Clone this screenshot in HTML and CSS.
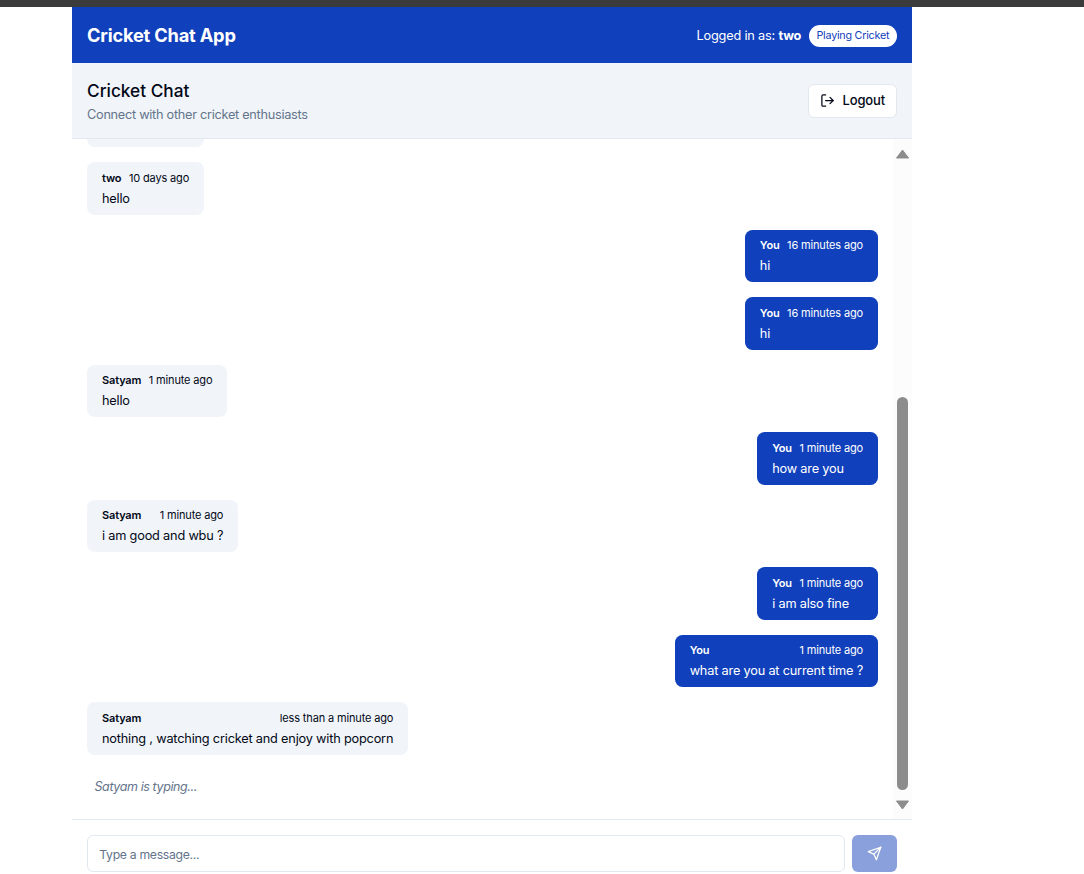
FILE: index.html
```html
<!DOCTYPE html>
<html lang="en">
<head>
<meta charset="utf-8">
<title>Cricket Chat App</title>
<link rel="stylesheet" href="styles.css">
</head>
<body>
<div class="browser-edge"></div>
<div class="app">
  <header class="app-header">
    <h1 class="app-title">Cricket Chat App</h1>
    <div class="user-info">
      <span>Logged in as: <strong>two</strong></span>
      <span class="badge">Playing Cricket</span>
    </div>
  </header>
  <section class="chat-header">
    <div>
      <h2 class="chat-title">Cricket Chat</h2>
      <p class="chat-sub">Connect with other cricket enthusiasts</p>
    </div>
    <button class="logout" type="button">
      <svg class="logout-icon" viewBox="0 0 24 24" fill="none" stroke="currentColor" stroke-width="2" stroke-linecap="round" stroke-linejoin="round"><path d="M9 21H5a2 2 0 0 1-2-2V5a2 2 0 0 1 2-2h4"/><polyline points="16 17 21 12 16 7"/><line x1="21" y1="12" x2="9" y2="12"/></svg>
      Logout
    </button>
  </section>
  <main class="chat-body">
    <div class="messages">
      <div class="msg other clipped"></div>
      <div class="msg other"><div class="meta"><span class="name">two</span><span>10 days ago</span></div><div class="text">hello</div></div>
      <div class="msg mine"><div class="meta"><span class="name">You</span><span>16 minutes ago</span></div><div class="text">hi</div></div>
      <div class="msg mine"><div class="meta"><span class="name">You</span><span>16 minutes ago</span></div><div class="text">hi</div></div>
      <div class="msg other"><div class="meta"><span class="name">Satyam</span><span>1 minute ago</span></div><div class="text">hello</div></div>
      <div class="msg mine"><div class="meta"><span class="name">You</span><span>1 minute ago</span></div><div class="text">how are you</div></div>
      <div class="msg other"><div class="meta"><span class="name">Satyam</span><span>1 minute ago</span></div><div class="text">i am good and wbu ?</div></div>
      <div class="msg mine"><div class="meta"><span class="name">You</span><span>1 minute ago</span></div><div class="text">i am also fine</div></div>
      <div class="msg mine"><div class="meta"><span class="name">You</span><span>1 minute ago</span></div><div class="text">what are you at current time ?</div></div>
      <div class="msg other"><div class="meta"><span class="name">Satyam</span><span>less than a minute ago</span></div><div class="text">nothing , watching cricket and enjoy with popcorn</div></div>
      <div class="typing">Satyam is typing...</div>
    </div>
    <div class="scrollbar">
      <svg class="arrow" viewBox="0 0 13 10"><path d="M6.5 1 12.5 9H.5z"/></svg>
      <div class="track"><div class="thumb"></div></div>
      <svg class="arrow" viewBox="0 0 13 10"><path d="M6.5 9 12.5 1H.5z"/></svg>
    </div>
  </main>
  <footer class="composer">
    <div class="input">Type a message...</div>
    <button class="send" type="button">
      <svg class="send-icon" viewBox="0 0 24 24" fill="none" stroke="currentColor" stroke-width="2" stroke-linecap="round" stroke-linejoin="round"><path d="m22 2-7 20-4-9-9-4Z"/><path d="M22 2 11 13"/></svg>
    </button>
  </footer>
</div>
</body>
</html>
```
FILE: styles.css
```css
* { box-sizing: border-box; }
html, body { margin: 0; height: 874px; overflow: hidden; background: #fff; }
body { font-family: Inter, "Noto Sans", sans-serif; color: #020817; font-size: 15px; }
h1, h2, p { margin: 0; }

.browser-edge { height: 7px; background: #3b3b3b; }
.app { width: 840px; margin-left: 72px; display: flex; flex-direction: column; height: 881px; background: #fff; }

.app-header { flex: none; height: 56px; padding: 1px 15px 0; display: flex; align-items: center; justify-content: space-between; background: #1040bb; color: #fff; }
.app-title { font-size: 18.25px; line-height: 26px; font-weight: 700; letter-spacing: -0.2px; margin-top: -1px; }
.user-info { display: flex; align-items: center; gap: 7.5px; font-size: 12.75px; letter-spacing: -0.2px; }
.user-info strong { font-weight: 700; }
.badge { background: #fff; color: #1040bb; font-size: 10.75px; line-height: 15px; letter-spacing: -0.23px; padding: 3.5px 7.75px; border-radius: 999px; }

.chat-header { flex: none; height: 76px; padding: 0 15px; display: flex; align-items: center; justify-content: space-between; background: #f1f5f9; border-bottom: 1px solid #e2e8f0; }
.chat-title { font-size: 17.25px; line-height: 26.25px; font-weight: 500; }
.chat-sub { font-size: 12.75px; line-height: 18.75px; letter-spacing: -0.29px; color: #64748b; padding-top: 2px; margin-bottom: -1px; }
.logout { display: flex; align-items: center; gap: 8px; height: 34px; padding: 0 11px 1px; background: #fff; border: 1px solid #e2e8f0; border-radius: 6px; color: #020817; font: 500 13px Inter, sans-serif; letter-spacing: -0.15px; }
.logout-icon { width: 15px; height: 15px; }

.chat-body { flex: none; height: 680px; display: flex; overflow: hidden; }
.messages { flex: 1; min-width: 0; display: flex; flex-direction: column; justify-content: flex-end; gap: 15px; padding: 0 15px 15.5px; overflow: hidden; }
.msg { flex: none; max-width: 80%; padding: 7.5px 15px 6.5px; border-radius: 7.5px; }
.msg.other { align-self: flex-start; background: #f1f5f9; color: #020817; }
.msg.mine { align-self: flex-end; background: #1040bb; color: #fff; }
.msg.clipped { width: 117px; height: 52.5px; }
.meta { display: flex; justify-content: space-between; gap: 7.5px; font-size: 11px; line-height: 15px; letter-spacing: -0.15px; padding-top: 1px; }
.name { font-weight: 600; }
.text { margin-top: 3.75px; font-size: 12.75px; line-height: 18.75px; letter-spacing: -0.2px; }
.typing { flex: none; padding: 8px 7.5px 7px; font-size: 12.5px; line-height: 18.75px; letter-spacing: -0.4px; font-style: italic; color: #64748b; }

.scrollbar { flex: none; width: 19px; display: flex; flex-direction: column; align-items: center; padding: 10px 0 9px; background: #fcfcfc; }
.arrow { flex: none; width: 13px; height: 10px; fill: #8c8c8c; stroke: #8c8c8c; stroke-width: 1; stroke-linejoin: round; }
.track { flex: 1; width: 100%; padding: 0 4px 10px; display: flex; flex-direction: column; justify-content: flex-end; }
.thumb { height: 393px; background: #8c8c8c; border-radius: 5.5px; }

.composer { flex: none; display: flex; gap: 7.5px; padding: 15px; border-top: 1px solid #e2e8f0; }
.input { flex: 1; height: 37px; display: flex; align-items: center; padding: 1px 11.25px 0; border: 1px solid #e2e8f0; border-radius: 6px; font-size: 12.25px; letter-spacing: -0.32px; color: #64748b; }
.send { flex: none; width: 45px; height: 37px; display: flex; align-items: center; justify-content: center; background: #8aa0dd; border: 0; border-radius: 6px; color: #fff; padding: 0; }
.send-icon { width: 15px; height: 15px; }
```
